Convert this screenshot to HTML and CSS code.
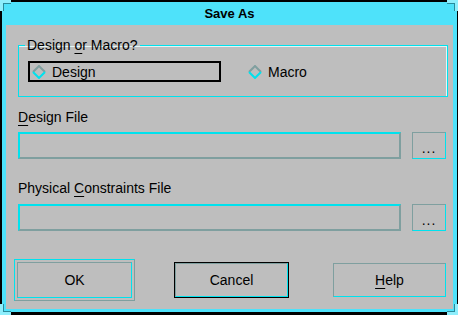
FILE: index.html
```html
<!DOCTYPE html>
<html lang="en">
<head>
    <meta charset="UTF-8">
    <title>Save As</title>
    <link rel="stylesheet" href="styles.css">
</head>
<body>

    <div class="window">
        <!-- resize corners -->
        <span class="corner tl"></span>
        <span class="corner tr"></span>
        <span class="corner bl"></span>
        <span class="corner br"></span>

        <div class="titlebar">Save As</div>

        <div class="content">
            <fieldset class="group">
                <legend>Design <u>o</u>r Macro?</legend>
                <div class="options">
                    <label class="option focused">
                        <svg class="diamond" width="14" height="14" viewBox="0 0 14 14">
                            <polyline points="1,7 7,1 13,7" fill="none" stroke="#7f9f9f" stroke-width="2"/>
                            <polyline points="1,7 7,13 13,7" fill="none" stroke="#00e2ee" stroke-width="2"/>
                        </svg>
                        Design
                    </label>
                    <label class="option">
                        <svg class="diamond" width="14" height="14" viewBox="0 0 14 14">
                            <polyline points="1,7 7,1 13,7" fill="none" stroke="#7f9f9f" stroke-width="2"/>
                            <polyline points="1,7 7,13 13,7" fill="none" stroke="#00e2ee" stroke-width="2"/>
                        </svg>
                        Macro
                    </label>
                </div>
            </fieldset>

            <div class="label first"><u>D</u>esign File</div>
            <div class="file-row">
                <div class="field"></div>
                <button class="browse">...</button>
            </div>

            <div class="label">Physical <u>C</u>onstraints File</div>
            <div class="file-row">
                <div class="field"></div>
                <button class="browse">...</button>
            </div>

            <div class="buttons">
                <div class="default-frame">
                    <button class="btn ok">OK</button>
                </div>
                <button class="btn cancel">Cancel</button>
                <button class="btn help"><u>H</u>elp</button>
            </div>
        </div>
    </div>

</body>
</html>
```

FILE: styles.css
```css
body {
    margin: 0;
    font-family: "Liberation Sans", Arial, sans-serif;
    font-size: 14px;
    color: #000;
}

.window {
    position: relative;
    width: 458px;
    height: 315px;
    box-sizing: border-box;
    border-top: 2px solid #000;
    border-left: 2px solid #000;
    border-right: 1px solid #000;
    border-bottom: 3px solid #000;
    background-color: #4ee2fa;
    padding: 0 4px 3px 4px;
    display: flex;
    flex-direction: column;
}

.corner {
    position: absolute;
    width: 8px;
    height: 8px;
    border-color: #8eeefc;
    border-style: solid;
    border-width: 0;
}

.corner.tl {
    top: -2px;
    left: -2px;
    border-top-width: 3px;
    border-left-width: 3px;
    box-shadow: inset 1px 1px 0 #2a8a9a;
}

.corner.tr {
    top: -2px;
    right: -1px;
    border-top-width: 3px;
    border-right-width: 3px;
    box-shadow: inset -1px 1px 0 #2a8a9a;
}

.corner.bl {
    bottom: -3px;
    left: -2px;
    border-bottom-width: 3px;
    border-left-width: 3px;
    box-shadow: inset 1px -1px 0 #2a8a9a;
}

.corner.br {
    bottom: -3px;
    right: -1px;
    border-bottom-width: 3px;
    border-right-width: 3px;
    box-shadow: inset -1px -1px 0 #2a8a9a;
}

.titlebar {
    height: 23px;
    display: flex;
    align-items: center;
    justify-content: center;
    font-weight: bold;
    font-size: 13px;
}

.content {
    flex: 1;
    background-color: #bebebe;
    padding: 12px 0 0 12px;
}

u {
    text-underline-offset: 3px;
}

/* Design or Macro group */
.group {
    margin: 0;
    padding: 8px 0 14px 0;
    width: 430px;
    box-sizing: border-box;
    min-width: 0;
    border: 1px solid #00e2ee;
    box-shadow: inset -1px 1px 0 #e4f6f6;
}

.group legend {
    margin-left: 6px;
    padding: 0 2px;
    line-height: 16px;
}

.options {
    display: flex;
    margin-left: 9px;
}

.option {
    display: flex;
    align-items: center;
    gap: 6px;
    height: 21px;
    box-sizing: border-box;
    border: 2px solid transparent;
    padding-left: 2px;
}

.option.focused {
    width: 193px;
    border-color: #000;
}

.option + .option {
    margin-left: 23px;
}

/* file fields */
.label {
    line-height: 16px;
    margin-top: 21px;
}

.label.first {
    margin-top: 12px;
}

.file-row {
    display: flex;
    margin-top: 8px;
}

.label.first + .file-row {
    margin-top: 7px;
}

.field {
    width: 383px;
    height: 27px;
    box-sizing: border-box;
    border: 2px solid;
    border-color: #00e2ee #7f9f9f #7f9f9f #00e2ee;
}

button {
    font-family: "Liberation Sans", Arial, sans-serif;
    font-size: 14px;
    color: #000;
    background: transparent;
    padding: 0;
    box-sizing: border-box;
    border: 1px solid;
    border-color: #7f9f9f #00e2ee #00e2ee #7f9f9f;
}

.browse {
    width: 34px;
    height: 27px;
    margin-left: 11px;
    padding-top: 4px;
    letter-spacing: 1px;
}

/* bottom buttons */
.buttons {
    display: flex;
    align-items: center;
    margin-top: 28px;
    margin-left: -4px;
}

.default-frame {
    border: 1px solid;
    border-color: #00e2ee #7f9f9f #7f9f9f #00e2ee;
    padding: 2px;
}

.btn {
    width: 113px;
    height: 34px;
}

.btn.ok {
    display: block;
    width: 115px;
    height: 36px;
}

.btn.cancel {
    margin-left: 40px;
    outline: 1px solid #000;
}

.btn.help {
    margin-left: 45px;
}
```
